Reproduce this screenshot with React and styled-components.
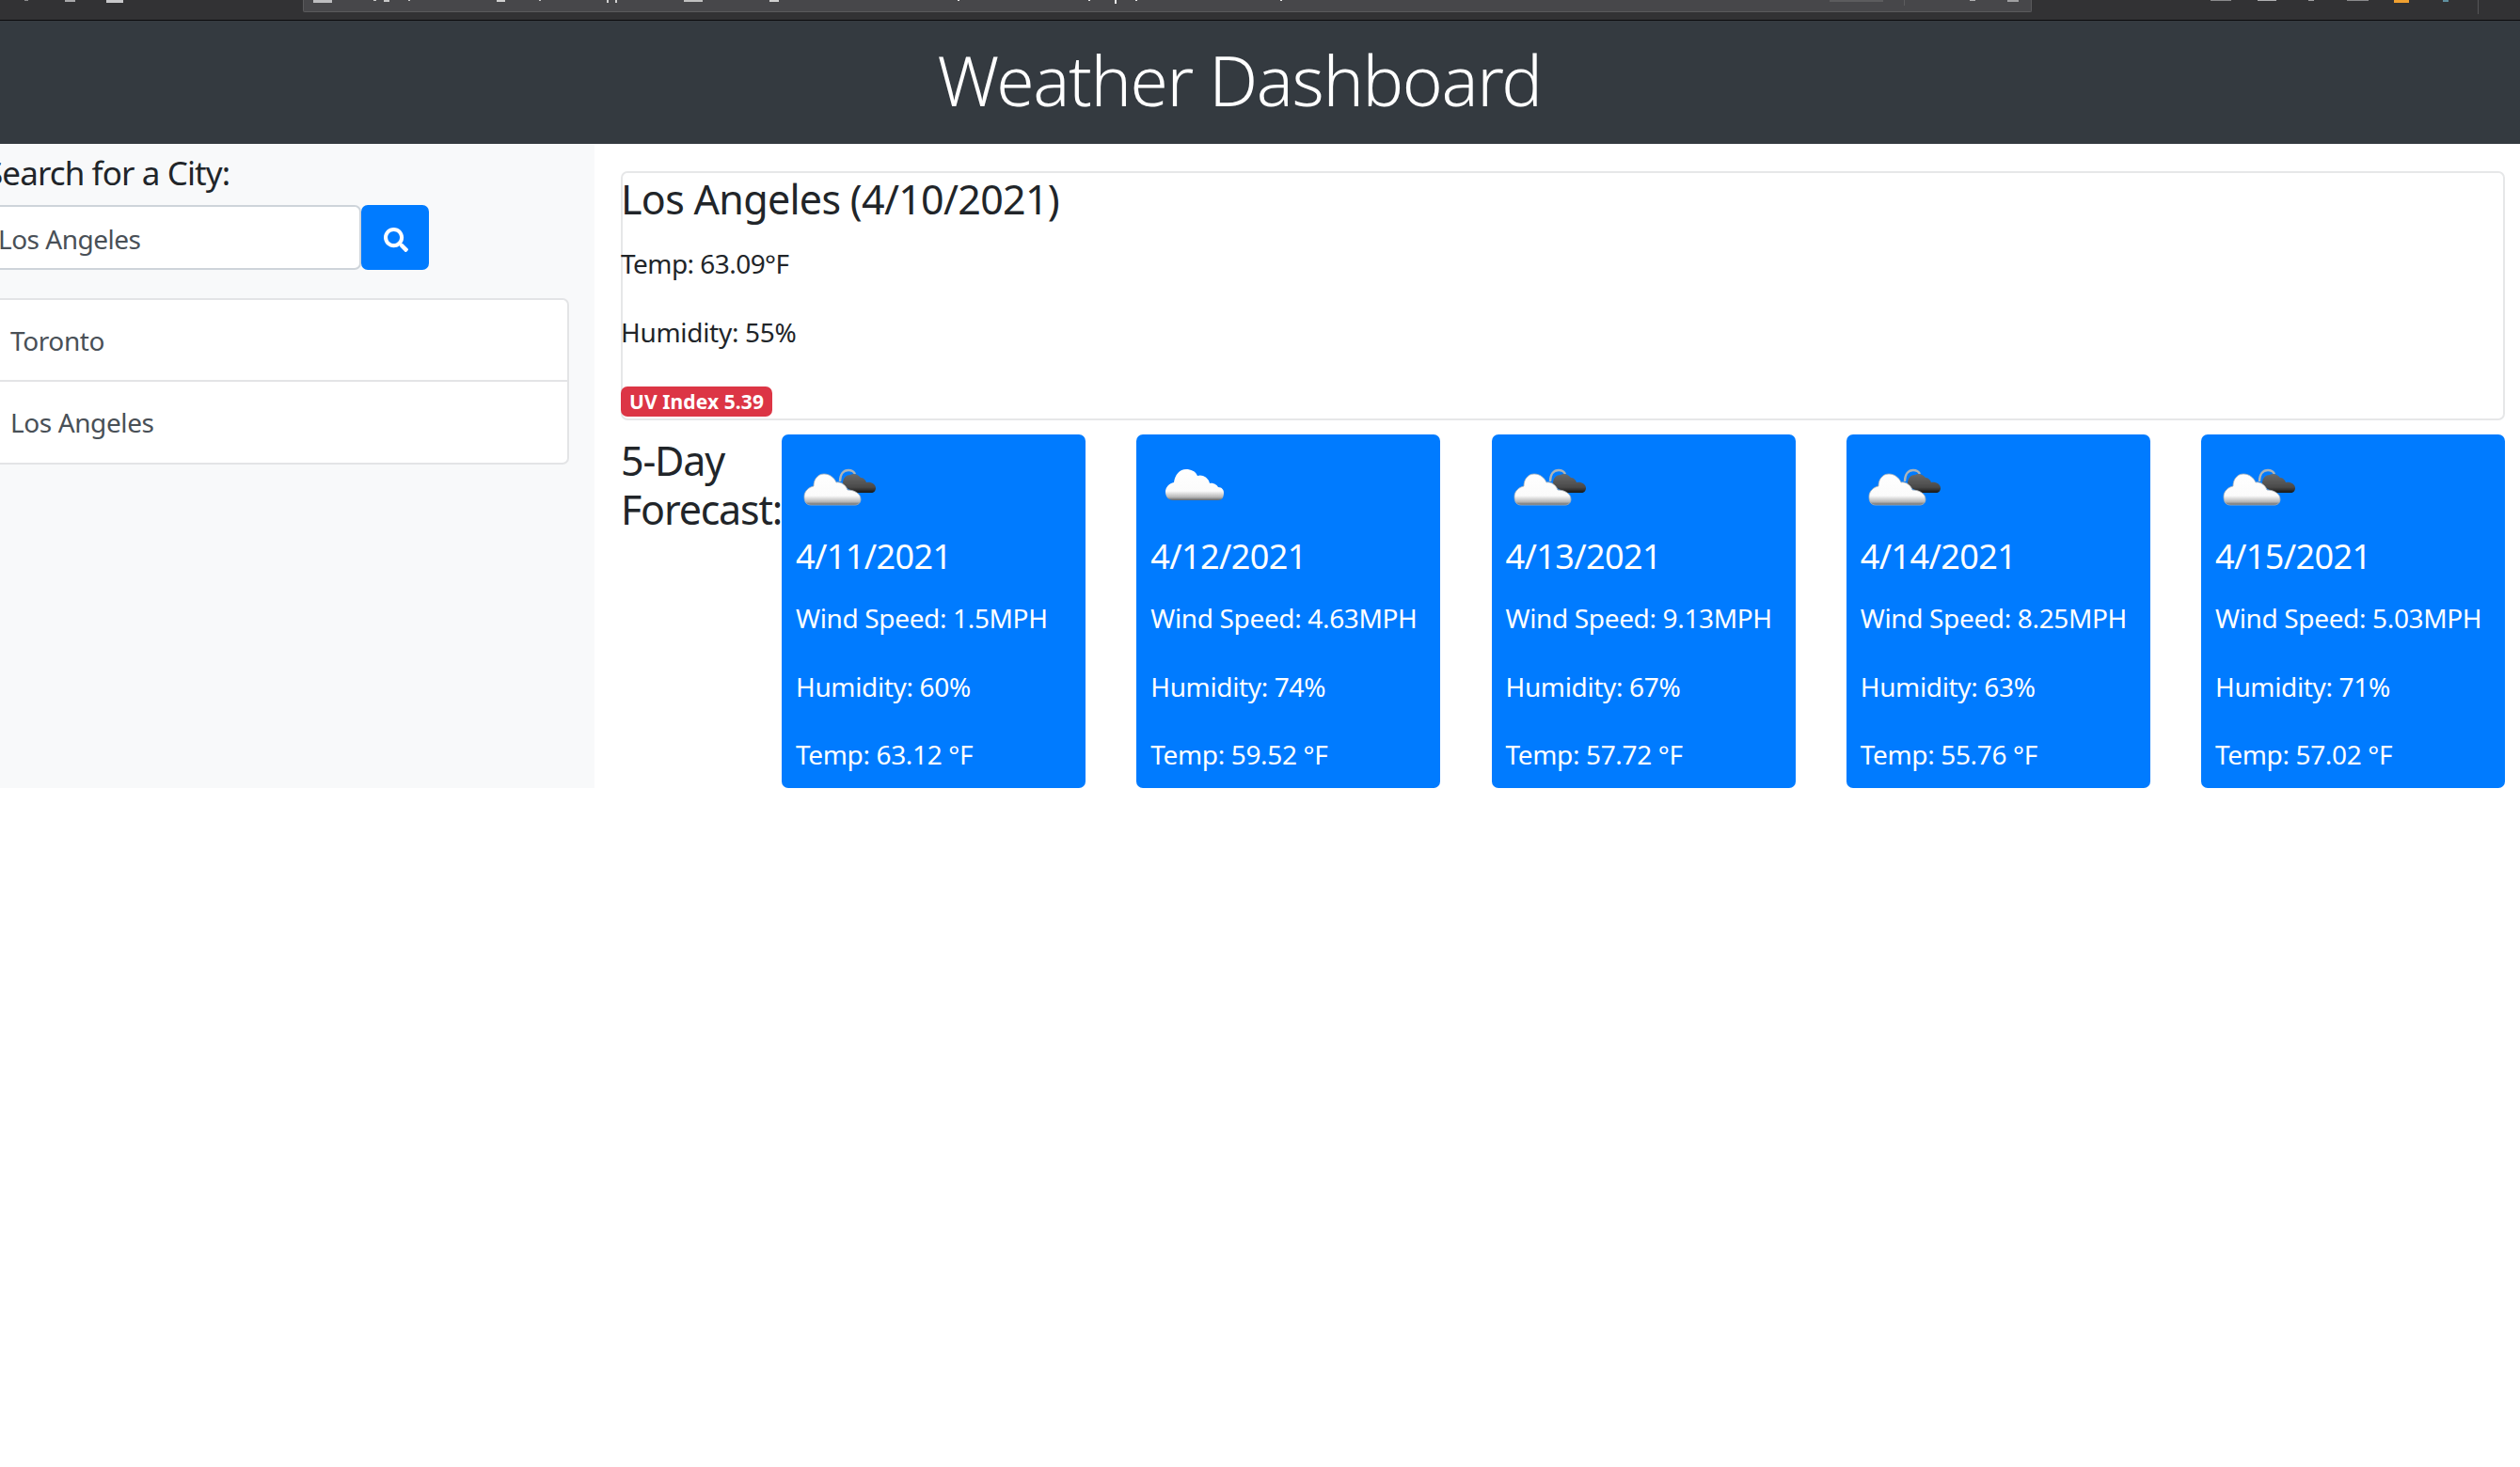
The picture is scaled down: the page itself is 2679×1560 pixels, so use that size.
import styled, { createGlobalStyle } from 'styled-components';
import { FaSearch } from 'react-icons/fa';

const GlobalStyle = createGlobalStyle`
  html, body {
    margin: 0;
    padding: 0;
    background: #fff;
  }
  body {
    font-family: "Noto Sans", "Open Sans", sans-serif;
    color: #212529;
    overflow: hidden;
  }
`;

const Page = styled.div`
  width: 2679px;
  height: 1560px;
  overflow: hidden;
`;

const BrowserStrip = styled.div`
  position: relative;
  height: 21px;
  background: #323234;
  border-bottom: 1px solid #0c0c0d;
  padding-left: 322px;
`;

const AddressBar = styled.div`
  width: 1838px;
  height: 13px;
  background: #47474a;
  border: 1px solid #5a5a5c;
  border-top: none;
  box-sizing: border-box;
  border-radius: 0 0 2px 2px;
`;

// the bottoms of the toolbar icons and url text that stick out of the crop
const ToolbarScraps = styled.svg`
  position: absolute;
  top: 0;
  left: 0;
`;

const Jumbotron = styled.header`
  height: 131px;
  box-sizing: border-box;
  background: #343a40;
  display: flex;
  align-items: center;
  justify-content: center;
  padding: 0 44px 7px 0;
`;

const Title = styled.h1`
  margin: 0;
  font-size: 73px;
  font-weight: 300;
  line-height: 1;
  color: #fff;
  letter-spacing: -1.4px;
`;

const Row = styled.div`
  display: flex;
  height: 685px;
`;

const Sidebar = styled.aside`
  width: 632px;
  background: #f8f9fa;
  overflow: hidden;
  flex: none;
`;

const SearchLabel = styled.h5`
  margin: 0 0 0 -16px;
  padding-top: 10px;
  font-size: 35px;
  font-weight: 400;
  line-height: 42px;
  letter-spacing: -0.9px;
`;

const SearchRow = styled.div`
  display: flex;
  margin: 13px 0 0 -40px;
`;

const CityInput = styled.input`
  width: 424px;
  height: 69px;
  box-sizing: border-box;
  border: 2px solid #ced4da;
  border-radius: 7px;
  background: #fff;
  font: inherit;
  font-size: 28px;
  color: #495057;
  padding: 2px 0 0 36px;
  letter-spacing: -0.5px;
  outline: none;
`;

const SearchButton = styled.button`
  width: 72px;
  height: 69px;
  border: none;
  border-radius: 7px;
  background: #007bff;
  color: #fff;
  display: flex;
  align-items: center;
  justify-content: center;
  padding: 4px 0 0 1px;
`;

const CityList = styled.ul`
  list-style: none;
  margin: 30px 0 0 -23px;
  padding: 0;
  width: 628px;
  box-sizing: border-box;
  background: #fff;
  border: 2px solid #e3e4e6;
  border-radius: 7px;
`;

const CityItem = styled.li`
  height: 85px;
  display: flex;
  align-items: center;
  padding-left: 32px;
  font-size: 28px;
  color: #495057;
  letter-spacing: -0.4px;
  & + & {
    height: 86px;
    border-top: 2px solid #e3e4e6;
  }
`;

const Main = styled.main`
  flex: 1;
  padding: 29px 16px 0 28px;
  min-width: 0;
`;

const CurrentCard = styled.section`
  height: 265px;
  box-sizing: border-box;
  border: 2px solid #e6e7e8;
  border-radius: 7px;
  display: flex;
  flex-direction: column;
`;

const CityTitle = styled.h3`
  margin: 2px 0 0 -2px;
  font-size: 43px;
  font-weight: 400;
  line-height: 52px;
  letter-spacing: -0.7px;
`;

const Stat = styled.p`
  margin: 21px 0 0 -2px;
  font-size: 28px;
  line-height: 42px;
  letter-spacing: -0.55px;
  & + & {
    margin-top: 31px;
    letter-spacing: -0.3px;
  }
`;

const UvBadge = styled.span`
  align-self: flex-start;
  margin: 37px 0 0 -2px;
  height: 32px;
  width: 161px;
  border-radius: 7px;
  background: #dc3545;
  color: #fff;
  font-size: 21px;
  font-weight: 700;
  display: flex;
  align-items: center;
  justify-content: center;
  letter-spacing: 0.1px;
`;

const ForecastRow = styled.div`
  display: flex;
  margin-top: 15px;
  height: 376px;
`;

const ForecastTitle = styled.h3`
  margin: 2px 0 0;
  width: 171px;
  flex: none;
  font-size: 43px;
  font-weight: 400;
  line-height: 52px;
  letter-spacing: -1.2px;
`;

const Cards = styled.div`
  flex: 1;
  display: flex;
  justify-content: space-between;
`;

const DayCard = styled.article`
  width: 323px;
  height: 376px;
  background: #007bff;
  color: #fff;
  border-radius: 7px;
  padding: 28px 15px 0;
  box-sizing: border-box;
`;

const DayIcon = styled.svg`
  display: block;
  width: 90px;
  height: 60px;
  margin-left: 6px;
`;

const DayDate = styled.h4`
  margin: 21px 0 0;
  font-size: 36px;
  font-weight: 400;
  line-height: 42px;
  letter-spacing: -0.6px;
`;

const DayStat = styled.p`
  margin: 23px 0 0;
  font-size: 28px;
  line-height: 42px;
  letter-spacing: -0.35px;
  & + & {
    margin-top: 30.5px;
  }
`;

const WHITE_CLOUD = 'M10 47C4 47 3 42 3 38C3 32 8 28 13 27C13 19 18 14 24 14C30 14 35 18 37 23C41 22 47 25 49 31C55 31 63 34 63 41C63 45 60 47 57 47Z';
const DARK_CLOUD = 'M44 24C44 19 47 15 52 15C55 13 60 14 63 18C66 18 68 20 69 23C74 22 79 25 79 29C79 32 77 34 74 34L56 34L44 26Z';
const PLAIN_CLOUD = 'M18 42C13 42 10 38 10 33C10 28 14 24 19 23C20 15 25 9 32 9C37 9 42 11 44 16C49 14 56 18 57 24C61 23 65 26 66 28C70 28 72 31 72 34C72 39 70 42 66 42Z';

const CloudIcon = ({ id, dark }) => (
  <DayIcon viewBox="0 0 90 60">
    <defs>
      <linearGradient id={`white-${id}`} x1="0" y1="0" x2="0" y2="1">
        <stop offset="0" stopColor="#ffffff" />
        <stop offset="0.7" stopColor="#fbfbfb" />
        <stop offset="0.9" stopColor="#b5b5b5" />
        <stop offset="1" stopColor="#5f6468" />
      </linearGradient>
      <linearGradient id={`dark-${id}`} x1="0" y1="0" x2="0" y2="1">
        <stop offset="0" stopColor="#6a6a6a" />
        <stop offset="0.7" stopColor="#4a4a4a" />
        <stop offset="1" stopColor="#161616" />
      </linearGradient>
      <filter id={`soft-${id}`} x="-10%" y="-10%" width="120%" height="120%">
        <feGaussianBlur stdDeviation="0.7" />
      </filter>
    </defs>
    <g filter={`url(#soft-${id})`}>
      {dark ? (
        <>
          <path d="M41 22C41 14 45 10 50 10C54 10 56 12 57 14" fill="none" stroke="#aeb4b8" strokeWidth="2.5" />
          <path d={DARK_CLOUD} fill={`url(#dark-${id})`} />
          <path d={WHITE_CLOUD} fill={`url(#white-${id})`} stroke="#aeb4b8" strokeWidth="0.8" />
        </>
      ) : (
        <path d={PLAIN_CLOUD} fill={`url(#white-${id})`} />
      )}
    </g>
  </DayIcon>
);

const scraps = [
  { x: 26, w: 4, h: 1, c: '#8a8a8c' },
  { x: 69, w: 11, h: 2, c: '#a8a8aa' },
  { x: 113, w: 18, h: 3, c: '#c8c8ca' },
  { x: 333, w: 20, h: 3, c: '#bdbdbf' },
  { x: 397, w: 3, h: 1, c: '#c8c8c8' },
  { x: 408, w: 6, h: 2, c: '#c8c8c8' },
  { x: 434, w: 2, h: 1, c: '#c8c8c8' },
  { x: 528, w: 9, h: 2, c: '#d0d0d0' },
  { x: 573, w: 2, h: 1, c: '#c8c8c8' },
  { x: 645, w: 2, h: 3, c: '#d0d0d0' },
  { x: 654, w: 2, h: 3, c: '#d0d0d0' },
  { x: 727, w: 20, h: 2, c: '#c0c0c0' },
  { x: 818, w: 10, h: 2, c: '#d0d0d0' },
  { x: 1018, w: 2, h: 1, c: '#e8e8e8' },
  { x: 1157, w: 2, h: 1, c: '#e8e8e8' },
  { x: 1185, w: 2, h: 4, c: '#e8e8e8' },
  { x: 1207, w: 2, h: 1, c: '#e8e8e8' },
  { x: 1361, w: 2, h: 1, c: '#e8e8e8' },
  { x: 1945, w: 57, h: 2, c: '#5c5c5e' },
  { x: 2024, w: 1, h: 6, c: '#5c5c5e' },
  { x: 2094, w: 6, h: 1, c: '#b0b0b2' },
  { x: 2134, w: 12, h: 2, c: '#a0a0a2' },
  { x: 2350, w: 22, h: 1, c: '#8a8a8c' },
  { x: 2400, w: 20, h: 1, c: '#b0b0b2' },
  { x: 2454, w: 6, h: 1, c: '#a0a0a2' },
  { x: 2495, w: 23, h: 1, c: '#8a8a8c' },
  { x: 2545, w: 16, h: 3, c: '#f0a030' },
  { x: 2597, w: 6, h: 2, c: '#5f8f9f' },
  { x: 2634, w: 1, h: 15, c: '#555557' },
];

const forecast = [
  { date: '4/11/2021', wind: '1.5MPH', humidity: '60%', temp: '63.12', dark: true },
  { date: '4/12/2021', wind: '4.63MPH', humidity: '74%', temp: '59.52', dark: false },
  { date: '4/13/2021', wind: '9.13MPH', humidity: '67%', temp: '57.72', dark: true },
  { date: '4/14/2021', wind: '8.25MPH', humidity: '63%', temp: '55.76', dark: true },
  { date: '4/15/2021', wind: '5.03MPH', humidity: '71%', temp: '57.02', dark: true },
];

const App = () => (
  <Page>
    <GlobalStyle />
    <BrowserStrip>
      <AddressBar />
      <ToolbarScraps width="2679" height="21">
        {scraps.map((s) => (
          <rect key={s.x} x={s.x} y="0" width={s.w} height={s.h} fill={s.c} />
        ))}
      </ToolbarScraps>
    </BrowserStrip>
    <Jumbotron>
      <Title>Weather Dashboard</Title>
    </Jumbotron>
    <Row>
      <Sidebar>
        <SearchLabel>Search for a City:</SearchLabel>
        <SearchRow>
          <CityInput defaultValue="Los Angeles" />
          <SearchButton aria-label="Search">
            <FaSearch size={26} />
          </SearchButton>
        </SearchRow>
        <CityList>
          <CityItem>Toronto</CityItem>
          <CityItem>Los Angeles</CityItem>
        </CityList>
      </Sidebar>
      <Main>
        <CurrentCard>
          <CityTitle>Los Angeles (4/10/2021)</CityTitle>
          <Stat>Temp: 63.09°F</Stat>
          <Stat>Humidity: 55%</Stat>
          <UvBadge>UV Index 5.39</UvBadge>
        </CurrentCard>
        <ForecastRow>
          <ForecastTitle>5-Day Forecast:</ForecastTitle>
          <Cards>
            {forecast.map((day, i) => (
              <DayCard key={day.date}>
                <CloudIcon id={i} dark={day.dark} />
                <DayDate>{day.date}</DayDate>
                <DayStat>Wind Speed: {day.wind}</DayStat>
                <DayStat>Humidity: {day.humidity}</DayStat>
                <DayStat>Temp: {day.temp} °F</DayStat>
              </DayCard>
            ))}
          </Cards>
        </ForecastRow>
      </Main>
    </Row>
  </Page>
);

export default App;
